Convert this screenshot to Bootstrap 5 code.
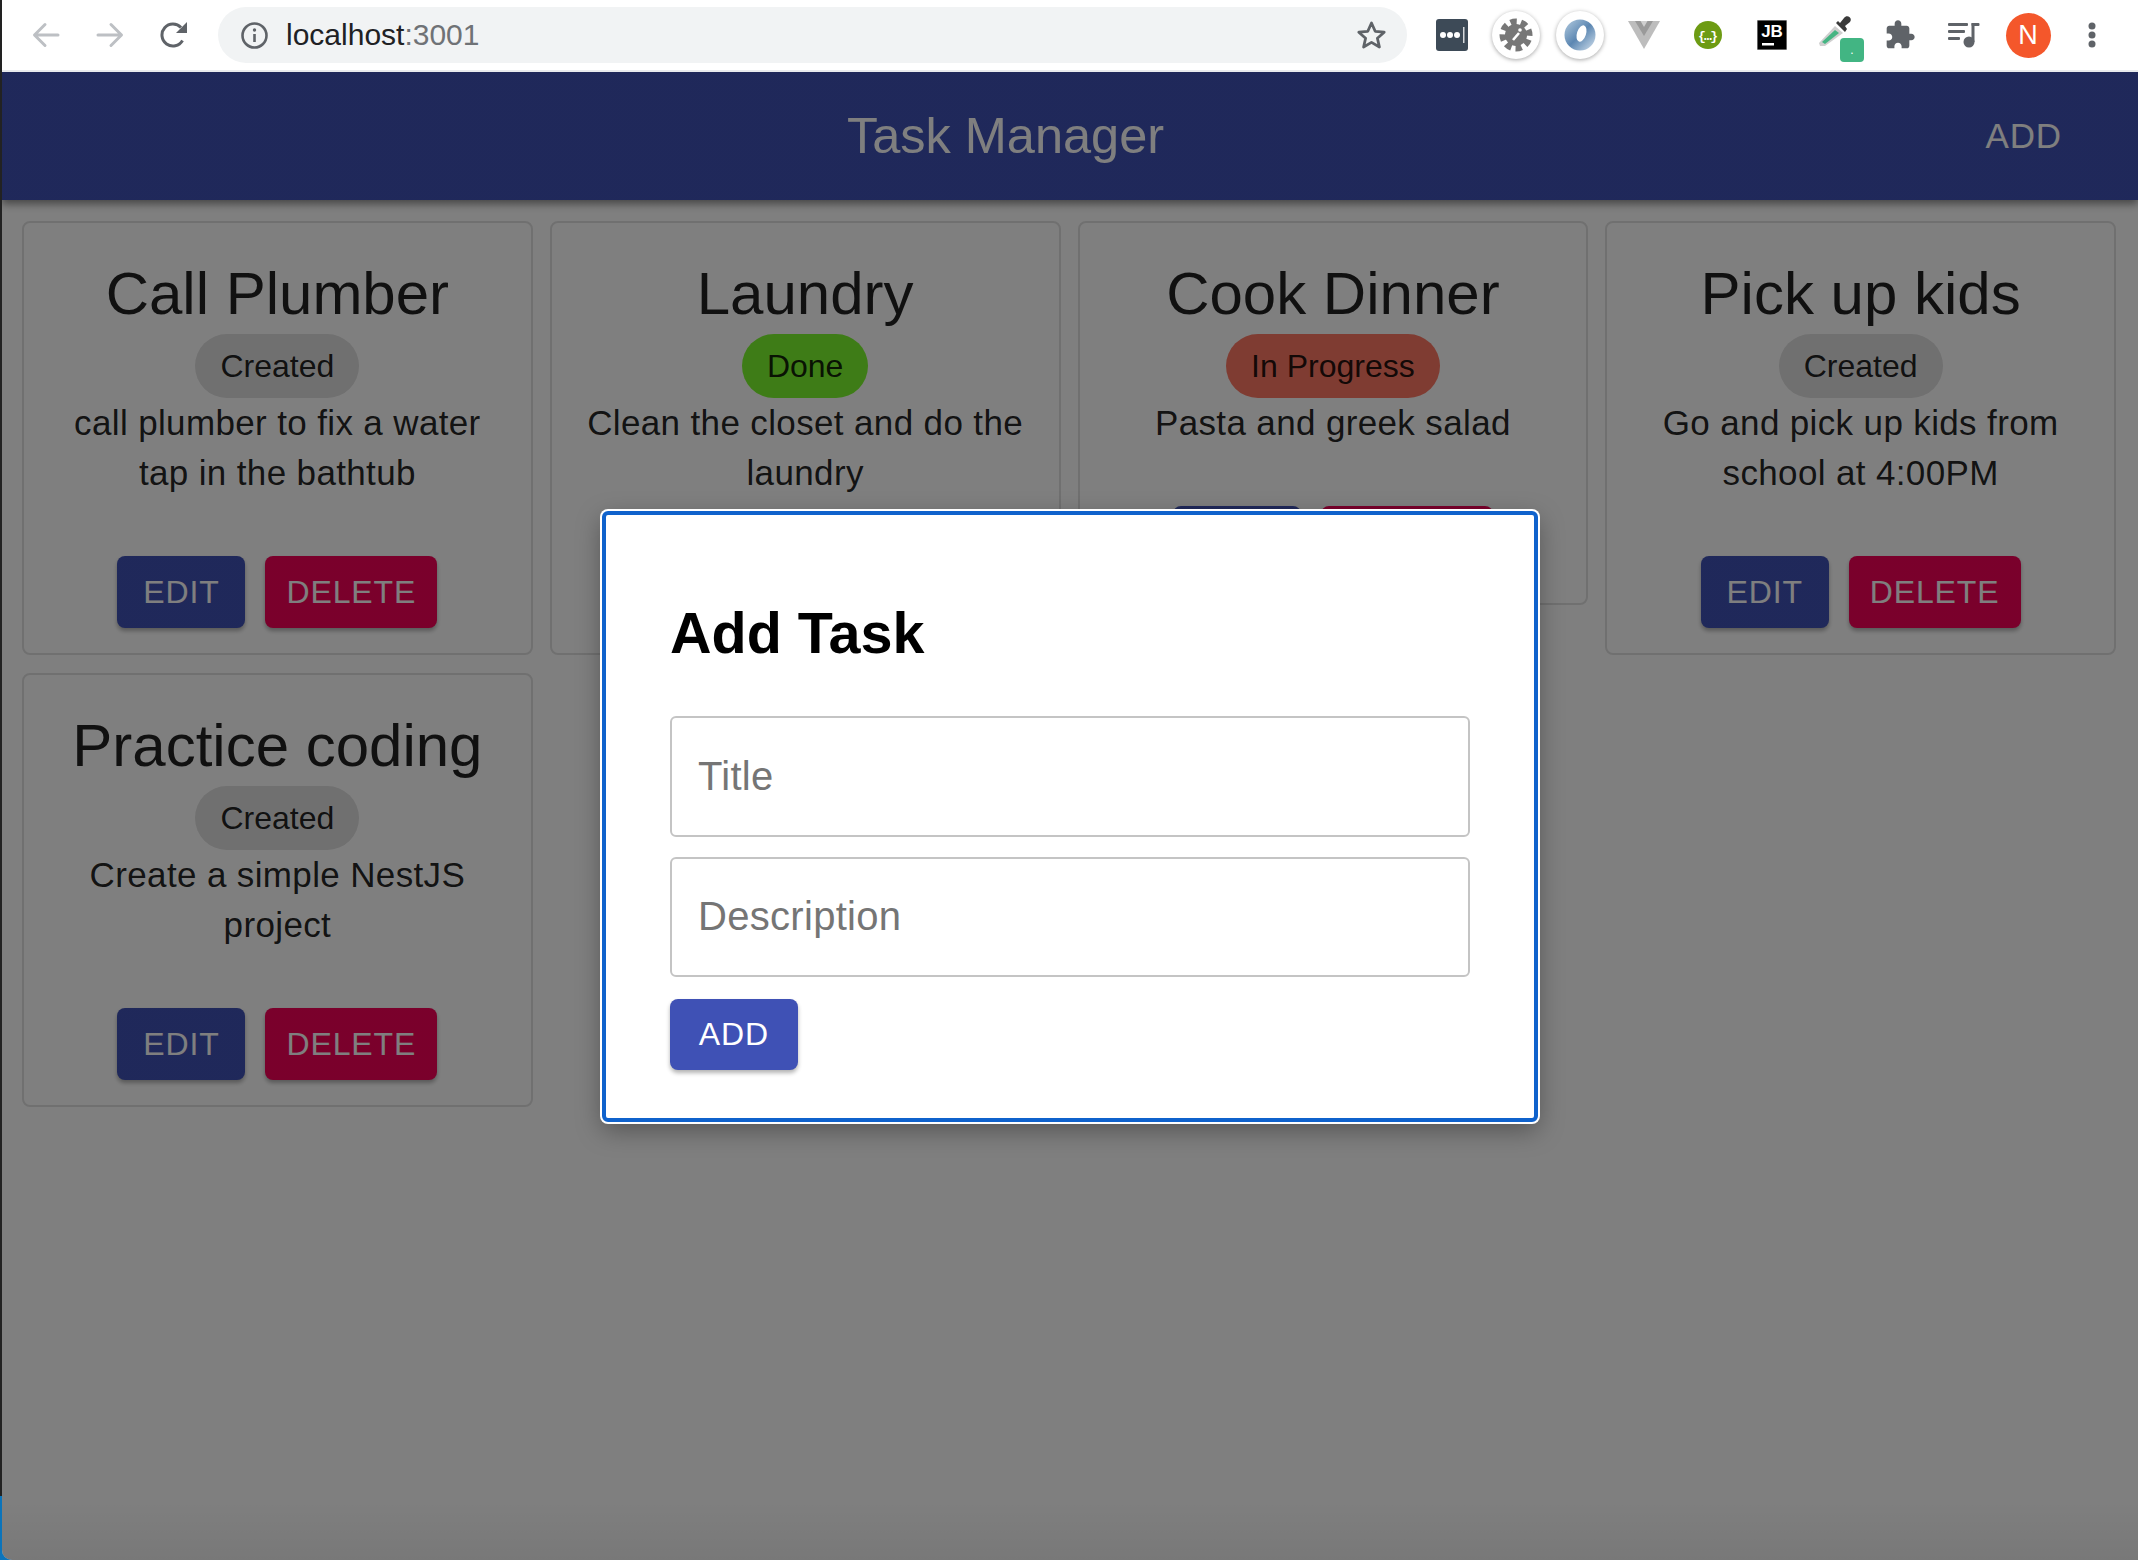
<!DOCTYPE html>
<html lang="en">

<head>
    <meta charset="UTF-8">
    <meta name="viewport" content="width=device-width, initial-scale=1.0">
    <title>Task Manager</title>
    <link href="https://cdn.jsdelivr.net/npm/bootstrap@5.3.1/dist/css/bootstrap.min.css" rel="stylesheet">
    <style>
        html, body { height: 100%; }
        body {
            font-family: "Liberation Sans", Arial, sans-serif;
            background: linear-gradient(to bottom, #222 1496px, #0b74bb 1496px);
            overflow: hidden;
        }
        .page-shell { margin-left: 2px; height: 1560px; }

        /* browser toolbar */
        .browser-bar { height: 72px; padding-left: 12px; background: #fff; border-bottom: 2px solid #e8eaed; }
        .tool-cell { width: 64px; height: 64px; flex: none; }
        .address-box { width: 1189px; height: 56px; margin: 0 13px 0 12px; padding: 0 20px 0 23px; background: #f1f3f4; flex: none; }
        .address-text { font-size: 30px; margin-left: 18px; color: #202124; line-height: 1; }
        .address-text span { color: #6f7276; }
        .ext-round { width: 48px; height: 48px; background: #fff; box-shadow: 0 1px 4px rgba(0, 0, 0, .35); }
        .user-dot { width: 45px; height: 45px; background: #f4572b; color: #fff; font-size: 27px; }
        .ext-badge { width: 24px; height: 24px; left: 36px; top: 35px; background: #42b583; color: #fff; font-size: 12px; line-height: 1; }

        /* app */
        .app-area { height: 1488px; background: #fff; border-bottom-left-radius: 10px; overflow: hidden; }
        .app-bar { height: 128px; background: #3f51b5; box-shadow: 0 4px 8px rgba(0, 0, 0, .45); }
        .app-title { margin: 0; font-size: 50.500px; font-weight: 400; color: #fff; text-align: center; padding-left: 54px; }
        .app-add { min-width: 128px; padding: 0 21px; margin-right: 7px; font-size: 35px; color: #fff; border: 0; background: none; letter-spacing: .9px; text-align: right; }
        .task-grid { display: grid; grid-template-columns: repeat(4, 1fr); gap: 18px 17px; align-items: start; padding: 21px 22px 0 20px; }
        .task-card { border: 2px solid rgba(0, 0, 0, .12); border-radius: 8px; background: transparent; color: rgba(0, 0, 0, .87); text-align: center; padding: 32px 30px 25px; }
        .task-title { font-size: 60px; line-height: 70px; font-weight: 400; margin: 4px 0 5px; }
        .task-chip { display: inline-block; height: 64px; line-height: 64px; padding: 0 25px; border-radius: 32px; font-size: 32px; background: #e0e0e0; vertical-align: top; }
        .chip-done { background: #7cf82e; }
        .chip-progress { background: #ff7864; }
        .task-desc { font-size: 35px; line-height: 50px; letter-spacing: .36px; margin: 0 0 58px; }
        .task-actions { gap: 20px; }
        .task-btn { min-width: 128px; height: 72px; padding: 0 21px; font-size: 32px; letter-spacing: .9px; color: #fff; border: 0; border-radius: 8px; box-shadow: 0 3px 4px rgba(0, 0, 0, .3); }
        .btn-navy, .btn-navy:hover { background: #3f51b5; color: #fff; }
        .btn-pink, .btn-pink:hover { background: #f50057; color: #fff; }

        /* dialog */
        .dim-layer { background: linear-gradient(to bottom, rgba(0, 0, 0, .5) 96%, rgba(0, 0, 0, .53)); }
        .add-dialog { width: 936px; height: 611px; padding: 64px; background: #fff; border: 4px solid #0f62cc; border-radius: 6px; box-shadow: 0 0 0 2px #fff, 0 8px 26px rgba(0, 0, 0, .35); }
        .add-heading { font-size: 57.500px; line-height: 64px; font-weight: 700; color: #000; margin: 22px 0 51px; }
        .add-input { height: 121px; padding: 0 26px; font-size: 40px; letter-spacing: .3px; border: 2px solid #c4c4c4; border-radius: 6px; margin-bottom: 20px; }
        .add-input::placeholder { color: #757575; }
        .add-input.short-one { height: 120px; margin-bottom: 22px; }
        .btn-indigo, .btn-indigo:hover { background: #3f51b5; color: #fff; }
        .add-btn { height: 71px; }
    </style>
</head>

<body>
    <div class="page-shell">
        <!-- browser toolbar -->
        <div class="browser-bar d-flex align-items-center">
            <div class="tool-cell d-flex align-items-center justify-content-center">
                <svg width="28" height="26" viewBox="0 0 28 26" fill="none" stroke="#bdc0c4" stroke-width="3" stroke-linecap="round" stroke-linejoin="round"><path d="M26 13H3M13 2.500 2.500 13 13 23.500"/></svg>
            </div>
            <div class="tool-cell d-flex align-items-center justify-content-center">
                <svg width="28" height="26" viewBox="0 0 28 26" fill="none" stroke="#bdc0c4" stroke-width="3" stroke-linecap="round" stroke-linejoin="round"><path d="M2 13H25M15 2.500 25.500 13 15 23.500"/></svg>
            </div>
            <div class="tool-cell d-flex align-items-center justify-content-center">
                <svg width="28" height="26" viewBox="0 0 28 26" fill="none"><path d="M22.500 18.500A11 11 0 1 1 21 5.500" stroke="#5f6368" stroke-width="3"/><path d="M27 0v11H16z" fill="#5f6368"/></svg>
            </div>
            <div class="address-box rounded-pill d-flex align-items-center">
                <svg width="27" height="27" viewBox="0 0 27 27" fill="none"><circle cx="13.500" cy="13.500" r="12" stroke="#5f6368" stroke-width="2.600"/><path d="M13.500 12v8" stroke="#5f6368" stroke-width="2.600"/><circle cx="13.500" cy="8" r="1.700" fill="#5f6368"/></svg>
                <div class="address-text flex-grow-1">localhost<span>:3001</span></div>
                <svg width="31" height="30" viewBox="0 0 31 30" fill="none"><path d="M15.500 3l3.700 8.300 9 .9-6.800 6 2 8.800-7.900-4.600L7.600 27l2-8.800-6.800-6 9-.9z" stroke="#5f6368" stroke-width="2.800" stroke-linejoin="round"/></svg>
            </div>
            <div class="tool-cell d-flex align-items-center justify-content-center">
                <svg width="32" height="32" viewBox="0 0 32 32"><rect width="32" height="32" rx="3" fill="#3d4a57"/><circle cx="7" cy="16" r="3" fill="#fff"/><circle cx="14" cy="16" r="3" fill="#fff"/><circle cx="21" cy="16" r="3" fill="#fff"/><rect x="27" y="8" width="1.500" height="16" fill="#d5d8db"/></svg>
            </div>
            <div class="tool-cell d-flex align-items-center justify-content-center">
                <div class="ext-round rounded-circle d-flex align-items-center justify-content-center">
                    <svg width="34" height="34" viewBox="0 0 34 34"><g transform="rotate(20 17 17)"><circle cx="17" cy="17" r="11" fill="#777"/><circle cx="17" cy="17" r="13" fill="none" stroke="#777" stroke-width="7" stroke-dasharray="6 4.200"/></g><circle cx="21" cy="12" r="1.800" fill="#fff"/><path d="M20 15 14 22" stroke="#fff" stroke-width="2.600"/></svg>
                </div>
            </div>
            <div class="tool-cell d-flex align-items-center justify-content-center">
                <div class="ext-round rounded-circle d-flex align-items-center justify-content-center">
                    <svg width="32" height="32" viewBox="0 0 32 32">
                        <defs><linearGradient id="ringBlue" x1="0" y1="0" x2="1" y2="1"><stop offset="0" stop-color="#b4cce0"/><stop offset=".5" stop-color="#5c87b2"/><stop offset="1" stop-color="#d3e1ee"/></linearGradient></defs>
                        <circle cx="16" cy="16" r="15.500" fill="url(#ringBlue)"/>
                        <ellipse cx="17.500" cy="14.500" rx="4.500" ry="8.500" transform="rotate(18 17.500 14.500)" fill="#fff"/>
                    </svg>
                </div>
            </div>
            <div class="tool-cell d-flex align-items-center justify-content-center">
                <svg width="32" height="28" viewBox="0 0 32 28"><path d="M0 0h32L16 28z" fill="#bdbdbd"/><path d="M7 0h18l-9 15z" fill="#9a9a9a"/><path d="M12.500 0h7L16 6z" fill="#d0d0d0"/></svg>
            </div>
            <div class="tool-cell d-flex align-items-center justify-content-center">
                <svg width="28" height="28" viewBox="0 0 28 28"><circle cx="14" cy="14" r="14" fill="#6d9b13"/><text x="14" y="18.500" text-anchor="middle" font-size="13" font-weight="700" font-family="Liberation Mono, monospace" fill="#fff" textLength="20">{…}</text></svg>
            </div>
            <div class="tool-cell d-flex align-items-center justify-content-center">
                <svg width="30" height="30" viewBox="0 0 30 30"><rect width="30" height="30" fill="#000" stroke="#c9c9c9"/><text x="15" y="17" text-anchor="middle" font-size="17" font-weight="700" font-family="Liberation Sans, sans-serif" fill="#fff">JB</text><rect x="5" y="23" width="12" height="2.500" fill="#fff"/></svg>
            </div>
            <div class="tool-cell position-relative d-flex align-items-center justify-content-center">
                <svg width="36" height="32" viewBox="0 0 36 32" class="mb-2"><path d="M1 28 17 11l8 7L7 31H2z" fill="#cfcfcf"/><path d="M4 27 17 15l4 3L7 29z" fill="#45b583"/><path d="M18 8l9 9 2-3-2-3 5-4c3-4-3-8-6-4l-4 5-2-2z" fill="#3a3a3a"/></svg>
                <div class="ext-badge position-absolute rounded-1 d-flex align-items-center justify-content-center">.</div>
            </div>
            <div class="tool-cell d-flex align-items-center justify-content-center">
                <svg width="32" height="32" viewBox="0 0 24 24"><path fill="#5f6368" d="M20.500 11H19V7c0-1.100-.9-2-2-2h-4V3.500C13 2.120 11.880 1 10.500 1S8 2.120 8 3.500V5H4c-1.100 0-1.990.9-1.990 2v3.800H3.500c1.490 0 2.700 1.210 2.700 2.700s-1.210 2.700-2.700 2.700H2V20c0 1.100.9 2 2 2h3.800v-1.500c0-1.490 1.210-2.700 2.700-2.700 1.490 0 2.700 1.210 2.700 2.700V22H17c1.100 0 2-.9 2-2v-4h1.500c1.380 0 2.500-1.120 2.500-2.500S21.880 11 20.500 11z"/></svg>
            </div>
            <div class="tool-cell d-flex align-items-center justify-content-center">
                <svg width="32" height="26" viewBox="0 0 32 26" fill="#5f6368"><rect y="1" width="20" height="3" rx="1"/><rect y="8" width="17" height="3" rx="1"/><rect y="15" width="12" height="3" rx="1"/><circle cx="21" cy="20" r="5.500"/><rect x="23.500" y="1" width="3" height="19"/><rect x="23.500" y="1" width="8" height="3" rx="1"/></svg>
            </div>
            <div class="tool-cell d-flex align-items-center justify-content-center">
                <div class="user-dot rounded-circle d-flex align-items-center justify-content-center">N</div>
            </div>
            <div class="tool-cell d-flex align-items-center justify-content-center">
                <svg width="8" height="26" viewBox="0 0 8 26" fill="#5f6368"><circle cx="4" cy="4" r="3.500"/><circle cx="4" cy="13" r="3.500"/><circle cx="4" cy="22" r="3.500"/></svg>
            </div>
        </div>

        <!-- app -->
        <div class="app-area position-relative">
            <nav class="app-bar navbar p-0 pe-5 d-flex align-items-center flex-nowrap">
                <h1 class="app-title flex-grow-1">Task Manager</h1>
                <button class="app-add btn">ADD</button>
            </nav>

            <div class="task-grid">
                <div class="task-card card">
                    <h3 class="task-title">Call Plumber</h3>
                    <div><span class="task-chip">Created</span></div>
                    <p class="task-desc">call plumber to fix a water tap in the bathtub</p>
                    <div class="task-actions d-flex justify-content-center">
                        <button class="task-btn btn btn-navy">EDIT</button>
                        <button class="task-btn btn btn-pink">DELETE</button>
                    </div>
                </div>
                <div class="task-card card">
                    <h3 class="task-title">Laundry</h3>
                    <div><span class="task-chip chip-done">Done</span></div>
                    <p class="task-desc">Clean the closet and do the laundry</p>
                    <div class="task-actions d-flex justify-content-center">
                        <button class="task-btn btn btn-navy">EDIT</button>
                        <button class="task-btn btn btn-pink">DELETE</button>
                    </div>
                </div>
                <div class="task-card card">
                    <h3 class="task-title">Cook Dinner</h3>
                    <div><span class="task-chip chip-progress">In Progress</span></div>
                    <p class="task-desc">Pasta and greek salad</p>
                    <div class="task-actions d-flex justify-content-center">
                        <button class="task-btn btn btn-navy">EDIT</button>
                        <button class="task-btn btn btn-pink">DELETE</button>
                    </div>
                </div>
                <div class="task-card card">
                    <h3 class="task-title">Pick up kids</h3>
                    <div><span class="task-chip">Created</span></div>
                    <p class="task-desc">Go and pick up kids from school at 4:00PM</p>
                    <div class="task-actions d-flex justify-content-center">
                        <button class="task-btn btn btn-navy">EDIT</button>
                        <button class="task-btn btn btn-pink">DELETE</button>
                    </div>
                </div>
                <div class="task-card card">
                    <h3 class="task-title">Practice coding</h3>
                    <div><span class="task-chip">Created</span></div>
                    <p class="task-desc">Create a simple NestJS project</p>
                    <div class="task-actions d-flex justify-content-center">
                        <button class="task-btn btn btn-navy">EDIT</button>
                        <button class="task-btn btn btn-pink">DELETE</button>
                    </div>
                </div>
            </div>

            <!-- add task dialog -->
            <div class="dim-layer position-absolute top-0 start-0 w-100 h-100 d-flex align-items-center justify-content-center">
                <div class="add-dialog">
                    <h2 class="add-heading">Add Task</h2>
                    <input class="add-input form-control" type="text" placeholder="Title">
                    <input class="add-input short-one form-control" type="text" placeholder="Description">
                    <button class="task-btn add-btn btn btn-indigo">ADD</button>
                </div>
            </div>
        </div>
    </div>

    <script src="https://cdn.jsdelivr.net/npm/bootstrap@5.3.1/dist/js/bootstrap.bundle.min.js"></script>
</body>

</html>
